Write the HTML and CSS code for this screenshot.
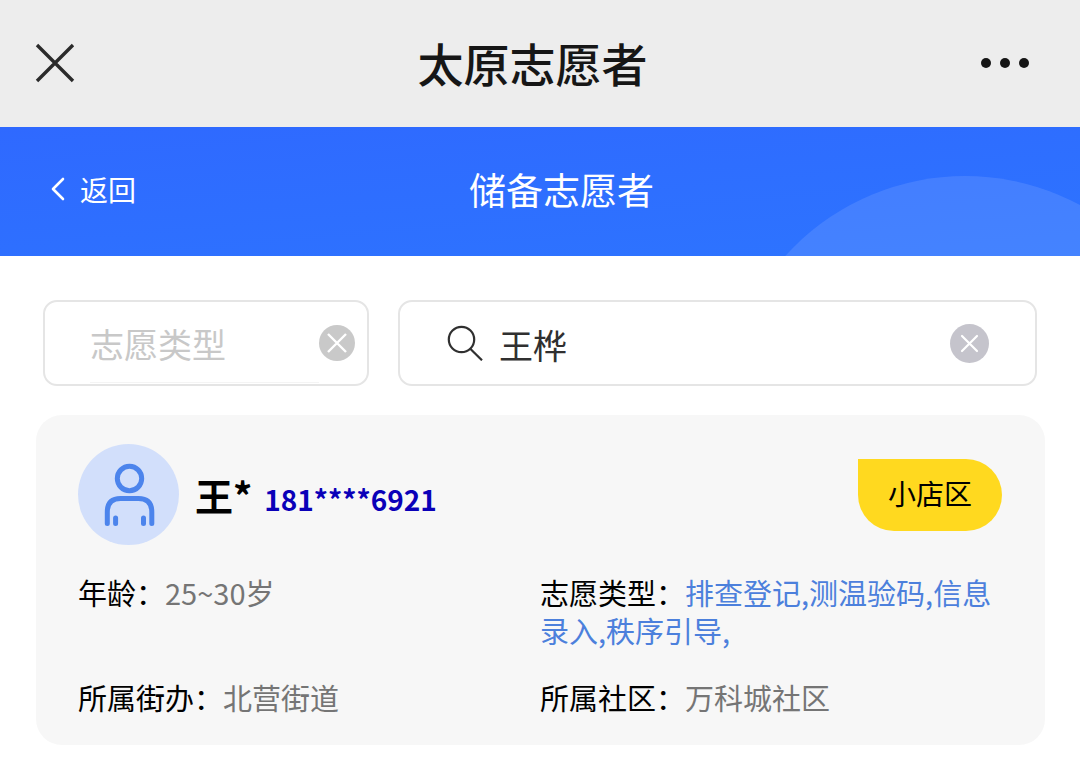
FILE: index.html
```html
<!DOCTYPE html>
<html lang="zh-CN">
<head>
<meta charset="utf-8">
<meta name="viewport" content="width=device-width, initial-scale=1">
<title>太原志愿者</title>
<link rel="stylesheet" href="styles.css">
</head>
<body>
<header class="appbar">
  <button class="icon-btn" type="button" aria-label="关闭">
    <svg width="40" height="40" viewBox="0 0 40 40" fill="none" stroke="#2b2b2b" stroke-width="3.4"><path d="M2 2 38 38M38 2 2 38"/></svg>
  </button>
  <h1 class="appbar-title">太原志愿者</h1>
  <button class="icon-btn icon-btn-end" type="button" aria-label="更多">
    <svg width="50" height="12" viewBox="0 0 50 12" fill="#161616"><circle cx="6" cy="6" r="5"/><circle cx="25" cy="6" r="5"/><circle cx="44" cy="6" r="5"/></svg>
  </button>
</header>

<nav class="navbar">
  <a class="back" href="#">
    <svg width="14" height="24" viewBox="0 0 14 24" fill="none" stroke="currentColor" stroke-width="2.6" stroke-linecap="round" stroke-linejoin="round"><path d="M12 2 2 12 12 22"/></svg>
    <span>返回</span>
  </a>
  <h2 class="navbar-title">储备志愿者</h2>
</nav>

<main>
  <form class="filters">
    <div class="field field-type">
      <input class="input input-type" type="text" placeholder="志愿类型" aria-label="志愿类型">
      <button class="icon-btn" type="button" aria-label="清除类型">
        <svg width="36" height="36" viewBox="0 0 36 36" fill="none"><circle cx="18" cy="18" r="18" fill="#c9c9c9"/><path d="M9 9 27 27M27 9 9 27" stroke="#fff" stroke-width="2.4"/></svg>
      </button>
    </div>
    <div class="field field-search">
      <svg width="36" height="36" viewBox="0 0 36 36" fill="none" stroke="#303030" stroke-width="2.2"><circle cx="14.500" cy="14.500" r="12.700"/><path d="M23 23.500 35 35.300"/></svg>
      <input class="input" type="text" value="王桦" aria-label="搜索">
      <button class="icon-btn" type="button" aria-label="清除搜索">
        <svg width="39" height="39" viewBox="0 0 39 39" fill="none"><circle cx="19.5" cy="19.5" r="19.5" fill="#c5c4cc"/><path d="M12 12 27 27M27 12 12 27" stroke="#fff" stroke-width="2.2" stroke-linecap="round"/></svg>
      </button>
    </div>
  </form>

  <article class="card">
    <div class="card-head">
      <svg width="101" height="101" viewBox="0 0 101 101" fill="none">
        <circle cx="50.5" cy="50.5" r="50.5" fill="#d2dffb"/>
        <g stroke="#4c84ec" stroke-width="5" stroke-linecap="round">
          <circle cx="51.5" cy="34.5" r="12.2"/>
          <path d="M29.3 79.5V68Q29.3 54.5 42.5 54.5H60.5Q73.8 54.5 73.8 68V79.5M37.6 74V79.5M65.5 74V79.5"/>
        </g>
      </svg>
      <strong class="name">王*</strong>
      <a class="phone" href="#">181****6921</a>
      <span class="badge">小店区</span>
    </div>
    <div class="details">
      <p><span>年龄：</span><span class="value">25~30岁</span></p>
      <p><span>志愿类型：</span><span class="value value-blue">排查登记,测温验码,信息录入,秩序引导,</span></p>
      <p><span>所属街办：</span><span class="value">北营街道</span></p>
      <p><span>所属社区：</span><span class="value">万科城社区</span></p>
    </div>
  </article>
</main>
</body>
</html>
```

FILE: styles.css
```css
* {
  box-sizing: border-box;
}

body {
  margin: 0;
  background: #fff;
  color: #000;
  font-family: "Noto Sans CJK SC", sans-serif;
}

h1,
h2,
p {
  margin: 0;
}

svg {
  display: block;
  flex: none;
}

.icon-btn {
  padding: 0;
  border: 0;
  background: none;
  flex: none;
}

.appbar {
  display: grid;
  grid-template-columns: 1fr auto 1fr;
  align-items: center;
  padding: 30px 50px 32px 35px;
  background: #ededed;
}

.icon-btn-end {
  justify-self: end;
}

.appbar-title {
  color: #161616;
  font-size: 46px;
  font-weight: 500;
  line-height: 65px;
}

.navbar {
  position: relative;
  overflow: hidden;
  display: grid;
  grid-template-columns: 1fr auto 1fr;
  align-items: center;
  padding: 30px 8px 35px 51px;
  background: linear-gradient(175deg, #2f69ff, #2d74ff);
  color: #fff;
}

.navbar::after {
  content: "";
  position: absolute;
  top: 49px;
  right: -127px;
  width: 484px;
  height: 484px;
  border-radius: 50%;
  background: rgba(255, 255, 255, 0.11);
}

.back {
  display: flex;
  align-items: center;
  gap: 15px;
  color: inherit;
  font-size: 28px;
  line-height: 40px;
  text-decoration: none;
}

.navbar-title {
  font-size: 37px;
  font-weight: 400;
  line-height: 64px;
}

.filters {
  display: grid;
  grid-template-columns: 326fr 639fr;
  gap: 29px;
  padding: 44px 43px 29px;
}

.field {
  display: flex;
  align-items: center;
  min-width: 0;
  height: 86px;
  border: 2px solid #e5e5e5;
  border-radius: 14px;
}

.field-type {
  padding: 0 12px 0 45px;
}

.field-search {
  gap: 16px;
  padding: 0 46px 0 47px;
}

.input {
  flex: 1;
  min-width: 0;
  height: 80px;
  padding: 2px 0 0;
  border: 0;
  outline: 0;
  background: none;
  color: #303030;
  font-family: inherit;
  font-size: 34px;
}

.input-type {
  border-bottom: 1px solid #f4f4f4;
}

.input::placeholder {
  color: #c8c8c8;
  opacity: 1;
}

.card {
  margin: 0 35px 21px 36px;
  padding: 29px 43px 29px 42px;
  border-radius: 26px;
  background: #f7f7f7;
}

.card-head {
  display: flex;
  align-items: center;
}

.name {
  margin-left: 16px;
  font-size: 38px;
  font-weight: 700;
  line-height: 56px;
}

.phone {
  margin: 8px 0 0 12px;
  color: #0a00b8;
  font-size: 28px;
  font-weight: 700;
  line-height: 40px;
  text-decoration: none;
}

.badge {
  margin-left: auto;
  padding: 14px 30px 18px;
  border-radius: 0 36px 36px 36px;
  background: #ffd91f;
  font-size: 28px;
  line-height: 40px;
}

.details {
  display: grid;
  grid-template-columns: 1fr 1fr;
  row-gap: 29px;
  padding-top: 28px;
  font-size: 29px;
  line-height: 38px;
}

.value {
  color: #757575;
}

.value-blue {
  color: #4c80dc;
}
```
